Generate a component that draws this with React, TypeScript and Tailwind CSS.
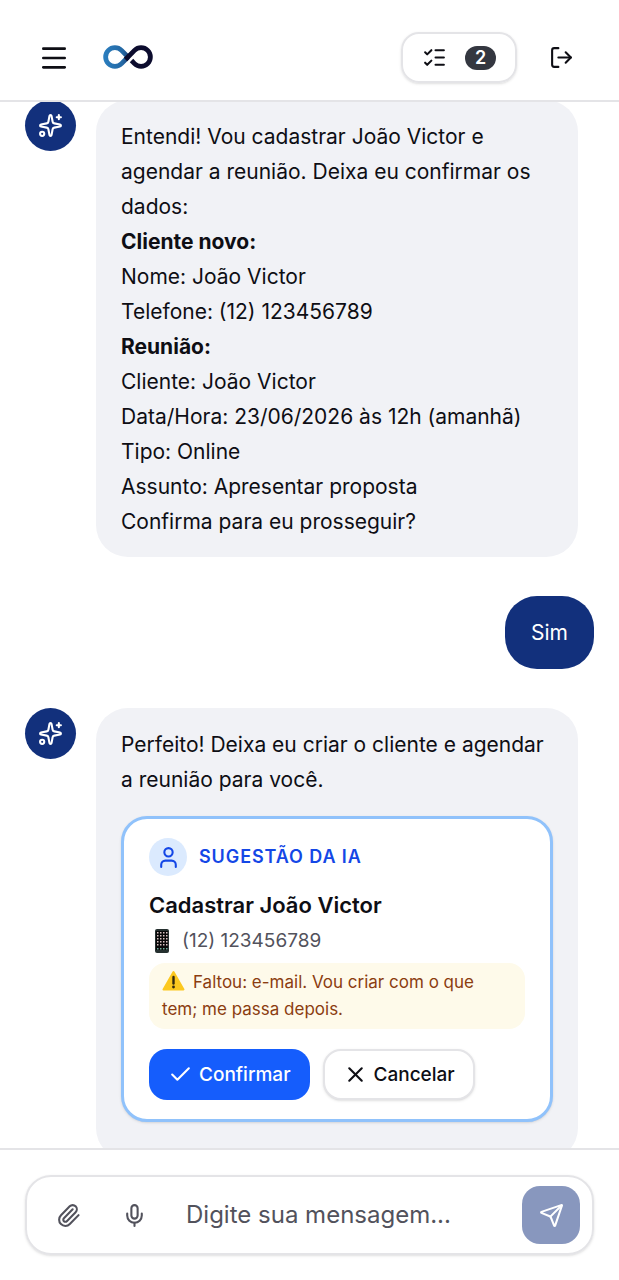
import { useState } from "react";
import { Check, ListChecks, LogOut, Menu, Mic, Paperclip, Send, Sparkles, User, X } from "lucide-react";

const confirmationLines = [
  { text: "Entendi! Vou cadastrar João Victor e agendar a reunião. Deixa eu confirmar os dados:" },
  { text: "Cliente novo:", bold: true },
  { text: "Nome: João Victor" },
  { text: "Telefone: (12) 123456789" },
  { text: "Reunião:", bold: true },
  { text: "Cliente: João Victor" },
  { text: "Data/Hora: 23/06/2026 às 12h (amanhã)" },
  { text: "Tipo: Online" },
  { text: "Assunto: Apresentar proposta" },
  { text: "Confirma para eu prosseguir?" },
];

function Logo() {
  return (
    <svg width="50" height="24" viewBox="0 0 50 24" fill="none" strokeWidth="4.8" role="img" aria-label="Logo">
      <defs>
        <linearGradient id="logo-blue" x1="0" y1="0" x2="28" y2="0" gradientUnits="userSpaceOnUse">
          <stop stopColor="#2b7fc0" />
          <stop offset="0.7" stopColor="#2468a4" />
          <stop offset="1" stopColor="#17386e" />
        </linearGradient>
      </defs>
      <path d="M25.500 12.500 18.500 5.420A9.300 9.300 0 1 0 18.500 18.580L25 12" stroke="url(#logo-blue)" />
      <path d="M22.500 14.500 31.500 5.420A9.300 9.300 0 1 1 31.500 18.580L28.500 15.500" stroke="#0c0c2e" />
    </svg>
  );
}

function PhoneEmoji() {
  return (
    <svg width="25" height="26" viewBox="0 0 25 26" className="shrink-0" aria-hidden="true">
      <rect x="6" y="1" width="14" height="24" rx="2" fill="#25302f" />
      <rect x="7" y="3" width="12" height="19" fill="#080808" />
      {[4, 7, 10, 13, 16, 20].map((y) =>
        [8, 11, 14, 17].map((x) => (
          <rect key={`${x}-${y}`} x={x} y={y} width="1.500" height="1.500" fill={y > 18 ? "#6fae9c" : "#d9c3c3"} />
        ))
      )}
    </svg>
  );
}

function WarningEmoji() {
  return (
    <svg width="23" height="21" viewBox="0 0 23 21" className="inline-block align-[-3px] mr-2" aria-hidden="true">
      <path d="M11.500 2 21.500 19.500H1.500Z" fill="#fcc81f" stroke="#fcc81f" strokeWidth="2" strokeLinejoin="round" />
      <path d="M11.500 7v6.500" stroke="#33290f" strokeWidth="2.400" strokeLinecap="round" />
      <circle cx="11.500" cy="17" r="1.400" fill="#33290f" />
    </svg>
  );
}

function Avatar() {
  return (
    <div className="size-[51px] shrink-0 rounded-full bg-[#12307c] text-white flex items-center justify-center">
      <Sparkles size={25} />
    </div>
  );
}

function SuggestionCard() {
  return (
    <section className="mt-[19px] rounded-[26px] border-3 border-[#90c2fb] bg-white px-[25px] py-[19px] shadow-sm">
      <div className="flex items-center gap-3">
        <span className="size-[38px] rounded-full bg-blue-100 text-blue-700 flex items-center justify-center">
          <User size={25} />
        </span>
        <span className="text-[18px] leading-7 font-semibold tracking-wider text-blue-700">SUGESTÃO DA IA</span>
      </div>
      <h2 className="mt-[13px] text-[22px] leading-8 font-semibold">Cadastrar João Victor</h2>
      <div className="mt-1.5 flex items-center gap-2 text-[19px] leading-7 text-zinc-600">
        <PhoneEmoji />
        (12) 123456789
      </div>
      <p className="mt-2 rounded-2xl bg-[#fefaea] px-[13px] py-1.5 text-[17px] leading-[27px] text-[#8b3d10]">
        <WarningEmoji />
        Faltou: e-mail. Vou criar com o que tem; me passa depois.
      </p>
      <div className="mt-5 flex gap-[13px]">
        <button className="h-[51px] rounded-[18px] bg-[#155dfc] px-[19px] flex items-center gap-1.5 text-[19px] font-medium text-white">
          <Check size={25} />
          Confirmar
        </button>
        <button className="h-[51px] rounded-[18px] border-2 border-zinc-200 bg-white px-[18px] flex items-center gap-1.5 text-[19px] font-medium shadow-sm">
          <X size={25} />
          Cancelar
        </button>
      </div>
    </section>
  );
}

export default function App() {
  const [message, setMessage] = useState("");

  return (
    <div className="h-screen flex flex-col overflow-hidden bg-white font-['Inter','Liberation_Sans',sans-serif] text-[#0e0e14]">
      <header className="relative z-10 flex items-center border-b-2 border-zinc-200 bg-white pt-8 pb-[17px] pl-[38px] pr-[45px]">
        <button aria-label="Menu">
          <Menu size={32} />
        </button>
        <a href="#" className="ml-[33px] pb-px">
          <Logo />
        </a>
        <button
          aria-label="Tarefas"
          className="ml-auto h-[51px] rounded-[18px] border-2 border-zinc-200 px-[19px] flex items-center gap-[18px] shadow-sm"
        >
          <ListChecks size={25} />
          <span className="h-6 w-[31px] rounded-full bg-[#343740] text-[18px] leading-6 font-semibold text-white">2</span>
        </button>
        <button aria-label="Sair" className="ml-8">
          <LogOut size={25} />
        </button>
      </header>

      <main className="-mt-0.5 min-h-0 flex-1 overflow-hidden px-[25px] flex flex-col gap-[39px] text-[21px] leading-[35px]">
        <div className="flex shrink-0 gap-5 pr-4">
          <Avatar />
          <div className="flex-1 rounded-4xl bg-[#f1f2f6] px-[25px] pt-[19px] pb-[18px]">
            {confirmationLines.map((line) => (
              <p key={line.text} className={line.bold ? "font-bold" : ""}>
                {line.text}
              </p>
            ))}
          </div>
        </div>

        <div className="shrink-0 self-end rounded-4xl bg-[#12307c] px-[26px] py-[19px] text-white">Sim</div>

        <div className="flex shrink-0 gap-5 pr-4">
          <Avatar />
          <div className="flex-1 rounded-4xl bg-[#f1f2f6] px-[25px] pt-[19px] pb-[38px]">
            <p>Perfeito! Deixa eu criar o cliente e agendar a reunião para você.</p>
            <SuggestionCard />
          </div>
        </div>
      </main>

      <footer className="border-t-2 border-zinc-200 bg-white px-[25px] pt-[25px] pb-[25px]">
        <form
          onSubmit={(e) => e.preventDefault()}
          className="h-20 rounded-[26px] border-2 border-zinc-200 pl-[29px] pr-3 flex items-center shadow-sm"
        >
          <button type="button" aria-label="Anexar arquivo" className="text-zinc-600">
            <Paperclip size={25} />
          </button>
          <button type="button" aria-label="Gravar áudio" className="ml-[41px] text-zinc-600">
            <Mic size={25} />
          </button>
          <input
            value={message}
            onChange={(e) => setMessage(e.target.value)}
            aria-label="Mensagem"
            placeholder="Digite sua mensagem..."
            className="ml-[39px] min-w-0 flex-1 text-[24px] outline-none placeholder:text-zinc-600"
          />
          <button
            aria-label="Enviar"
            className="size-[58px] shrink-0 rounded-[18px] bg-[#8897be] text-white flex items-center justify-center"
          >
            <Send size={25} />
          </button>
        </form>
      </footer>
    </div>
  );
}
